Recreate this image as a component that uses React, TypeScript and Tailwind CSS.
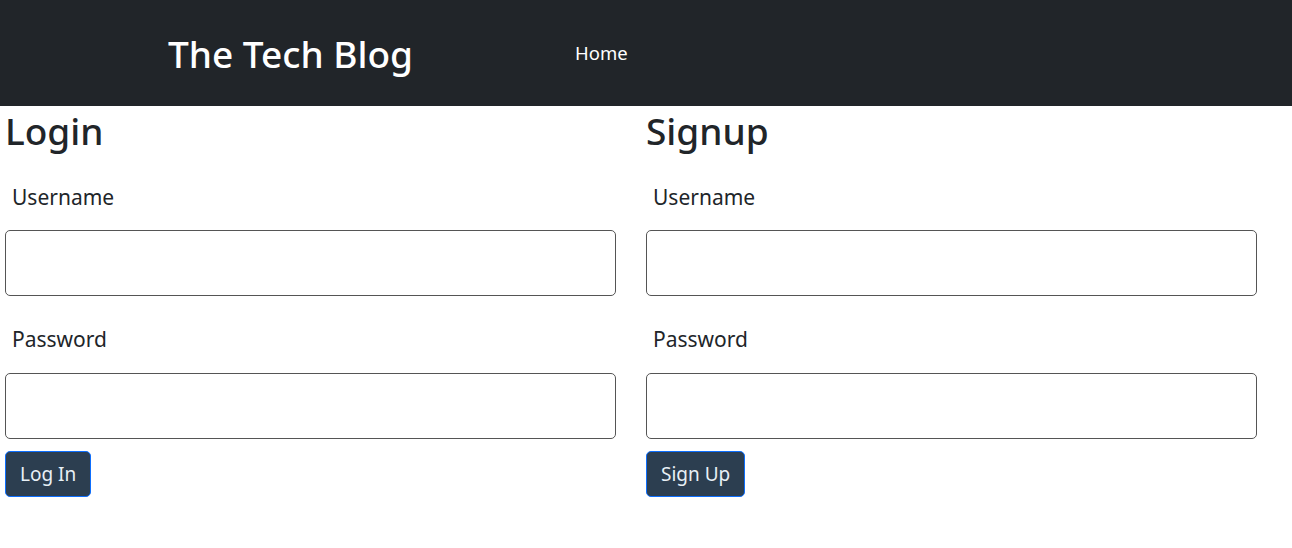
import React from 'react'

const font = { fontFamily: '"Noto Sans", "Open Sans", sans-serif' }

function AuthForm({ title, button }: { title: string; button: string }) {
  return (
    <form className="flex flex-col" onSubmit={(e) => e.preventDefault()}>
      <h2 className="text-[37px] leading-[50px] font-medium text-[#212529]">{title}</h2>
      <label className="mt-[26px] pl-[7px] text-[21px] leading-[30px] text-[#212529]">Username</label>
      <input
        type="text"
        className="mt-[18px] h-[66px] w-[611px] rounded-[5px] border border-[#555] bg-white px-3 outline-none"
      />
      <label className="mt-[28px] pl-[7px] text-[21px] leading-[30px] text-[#212529]">Password</label>
      <input
        type="password"
        className="mt-[19px] h-[66px] w-[611px] rounded-[5px] border border-[#555] bg-white px-3 outline-none"
      />
      <div className="mt-3">
        <button
          type="submit"
          className="h-[46px] rounded-[5px] border border-[#0d6efd] bg-[#2c3e50] px-[14px] text-[19px] text-[#e8f0f6]"
        >
          {button}
        </button>
      </div>
    </form>
  )
}

export default function App() {
  return (
    <div className="min-h-screen bg-white" style={font}>
      {/* Navbar */}
      <header className="flex h-[106px] items-center bg-[#212529] pl-[168px]">
        <h1 className="w-[407px] text-[37px] font-medium leading-none text-white">The Tech Blog</h1>
        <a href="#" className="mb-[1px] text-[18.5px] text-white">Home</a>
      </header>

      {/* Login / Signup */}
      <main className="grid grid-cols-[611px_611px] gap-[30px] pl-[5px]">
        <AuthForm title="Login" button="Log In" />
        <AuthForm title="Signup" button="Sign Up" />
      </main>
    </div>
  )
}
